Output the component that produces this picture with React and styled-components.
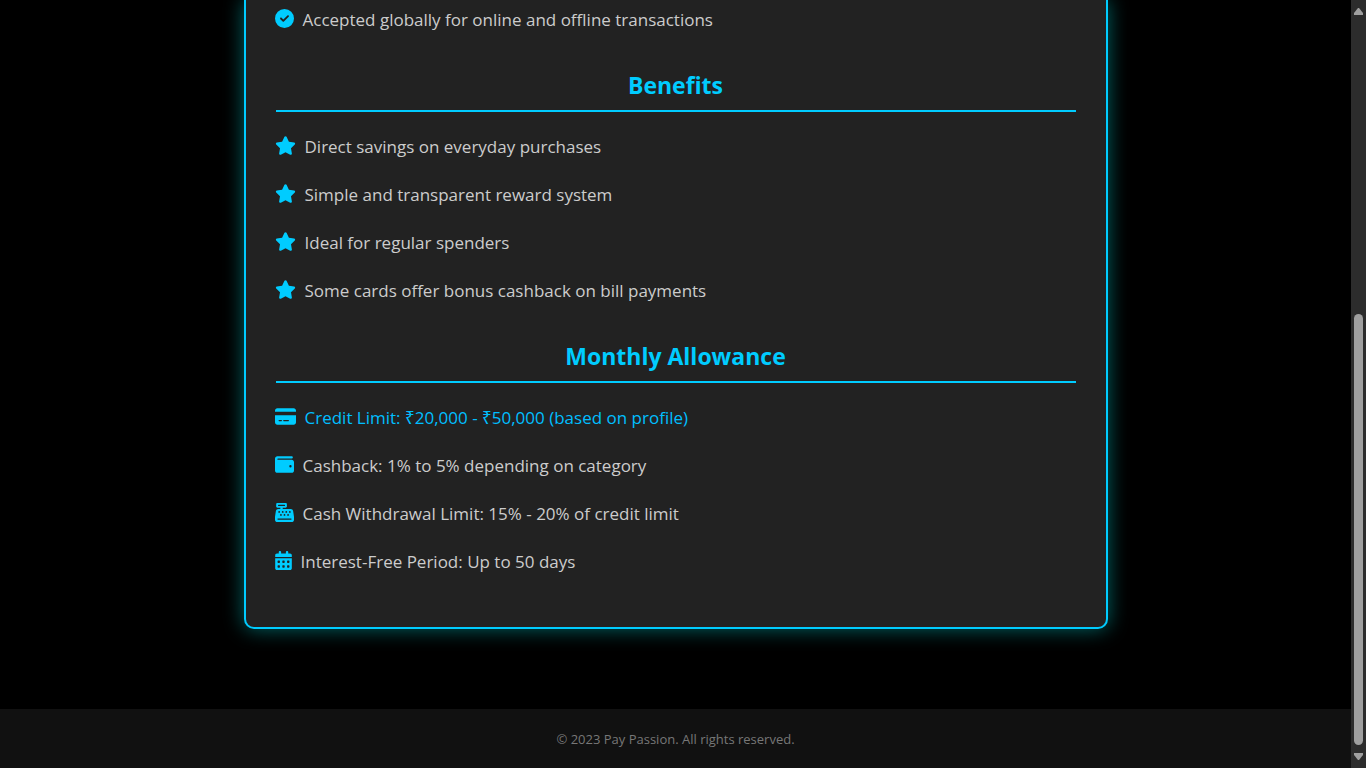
import React from "react";
import styled, { createGlobalStyle } from "styled-components";
import {
  FaCircleCheck,
  FaStar,
  FaCreditCard,
  FaWallet,
  FaCashRegister,
  FaCalendarDays,
} from "react-icons/fa6";

const GlobalStyle = createGlobalStyle`
  * { box-sizing: border-box; }
  body {
    margin: 0;
    background: #000;
    color: #ccc;
    font-family: "Segoe UI", "Open Sans", "Noto Sans", sans-serif;
  }
`;

const Shell = styled.div`
  display: grid;
  grid-template-columns: minmax(0, 1fr) 15px;
  min-height: 100vh;
`;

const Page = styled.div`
  display: flex;
  flex-direction: column;
`;

const Card = styled.main`
  width: 100%;
  max-width: 864px;
  margin: 0 auto 80px;
  padding: 6px 30px 42px;
  background: #222;
  border: 2px solid #00ccff;
  border-top: 0;
  border-radius: 0 0 10px 10px;
  box-shadow: 0 0 20px rgba(0, 255, 255, 0.4);
`;

const SectionTitle = styled.h2`
  margin: 26px 0 0;
  padding-bottom: 9px;
  border-bottom: 2px solid #00ccff;
  color: #00ccff;
  font-size: 23px;
  font-weight: 700;
  line-height: 32px;
  text-align: center;
`;

const List = styled.ul`
  display: grid;
  gap: 20px;
  margin: 0 0 0 -1px;
  padding: ${(p) => (p.$continued ? 0 : 21)}px 0 9px;
  list-style: none;
`;

const Item = styled.li`
  display: flex;
  align-items: center;
  gap: 9px;
  color: ${(p) => (p.$accent ? "#00bfff" : "#ccc")};
  font-size: 17px;
  line-height: 28px;
`;

const IconSlot = styled.span`
  display: flex;
  flex: none;
  width: ${(p) => p.$width}px;
  padding-bottom: 4px;
  color: #00ccff;

  svg {
    width: 100%;
    height: 19px;
    overflow: visible;
  }
`;

const Footer = styled.footer`
  flex: 1;
  padding: 20px 20px 18px;
  background: #111;
  color: #777;
  font-size: 13px;
  line-height: 21px;
  text-align: center;

  p { margin: 0; }
`;

const ScrollTrack = styled.div`
  display: flex;
  flex-direction: column;
  align-items: center;
  padding: 8px 0;
  background: #2c2c2c;

  svg { display: block; }
`;

const ScrollThumb = styled.div`
  width: 9px;
  flex: 431;
  margin-bottom: 8px;
  border-radius: 5px;
  background: #9f9f9f;
`;

const ScrollSpace = styled.div`
  flex: 299;
`;

const features = [
  { Icon: FaCircleCheck, width: 19, text: "Accepted globally for online and offline transactions" },
];

const benefits = [
  "Direct savings on everyday purchases",
  "Simple and transparent reward system",
  "Ideal for regular spenders",
  "Some cards offer bonus cashback on bill payments",
].map((text) => ({ Icon: FaStar, width: 21, text }));

const allowance = [
  { Icon: FaCreditCard, width: 21, text: "Credit Limit: ₹20,000 - ₹50,000 (based on profile)", accent: true },
  { Icon: FaWallet, width: 19, text: "Cashback: 1% to 5% depending on category" },
  { Icon: FaCashRegister, width: 19, text: "Cash Withdrawal Limit: 15% - 20% of credit limit" },
  { Icon: FaCalendarDays, width: 17, text: "Interest-Free Period: Up to 50 days" },
];

function IconList({ items, continued }) {
  return (
    <List $continued={continued}>
      {items.map(({ Icon, width, text, accent }) => (
        <Item key={text} $accent={accent}>
          <IconSlot $width={width} aria-hidden="true">
            <Icon />
          </IconSlot>
          <span>{text}</span>
        </Item>
      ))}
    </List>
  );
}

export default function App() {
  return (
    <Shell>
      <GlobalStyle />
      <Page>
        <Card>
          <IconList items={features} continued />
          <SectionTitle>Benefits</SectionTitle>
          <IconList items={benefits} />
          <SectionTitle>Monthly Allowance</SectionTitle>
          <IconList items={allowance} />
        </Card>
        <Footer>
          <p>© 2023 Pay Passion. All rights reserved.</p>
        </Footer>
      </Page>
      <ScrollTrack aria-hidden="true">
        <svg width="9" height="7" viewBox="0 0 9 7" fill="#9f9f9f">
          <path d="M4 0h1l4 5v2H0V5z" />
        </svg>
        <ScrollSpace />
        <ScrollThumb />
        <svg width="9" height="7" viewBox="0 0 9 7" fill="#9f9f9f">
          <path d="M4 7h1l4-5V0H0v2z" />
        </svg>
      </ScrollTrack>
    </Shell>
  );
}
